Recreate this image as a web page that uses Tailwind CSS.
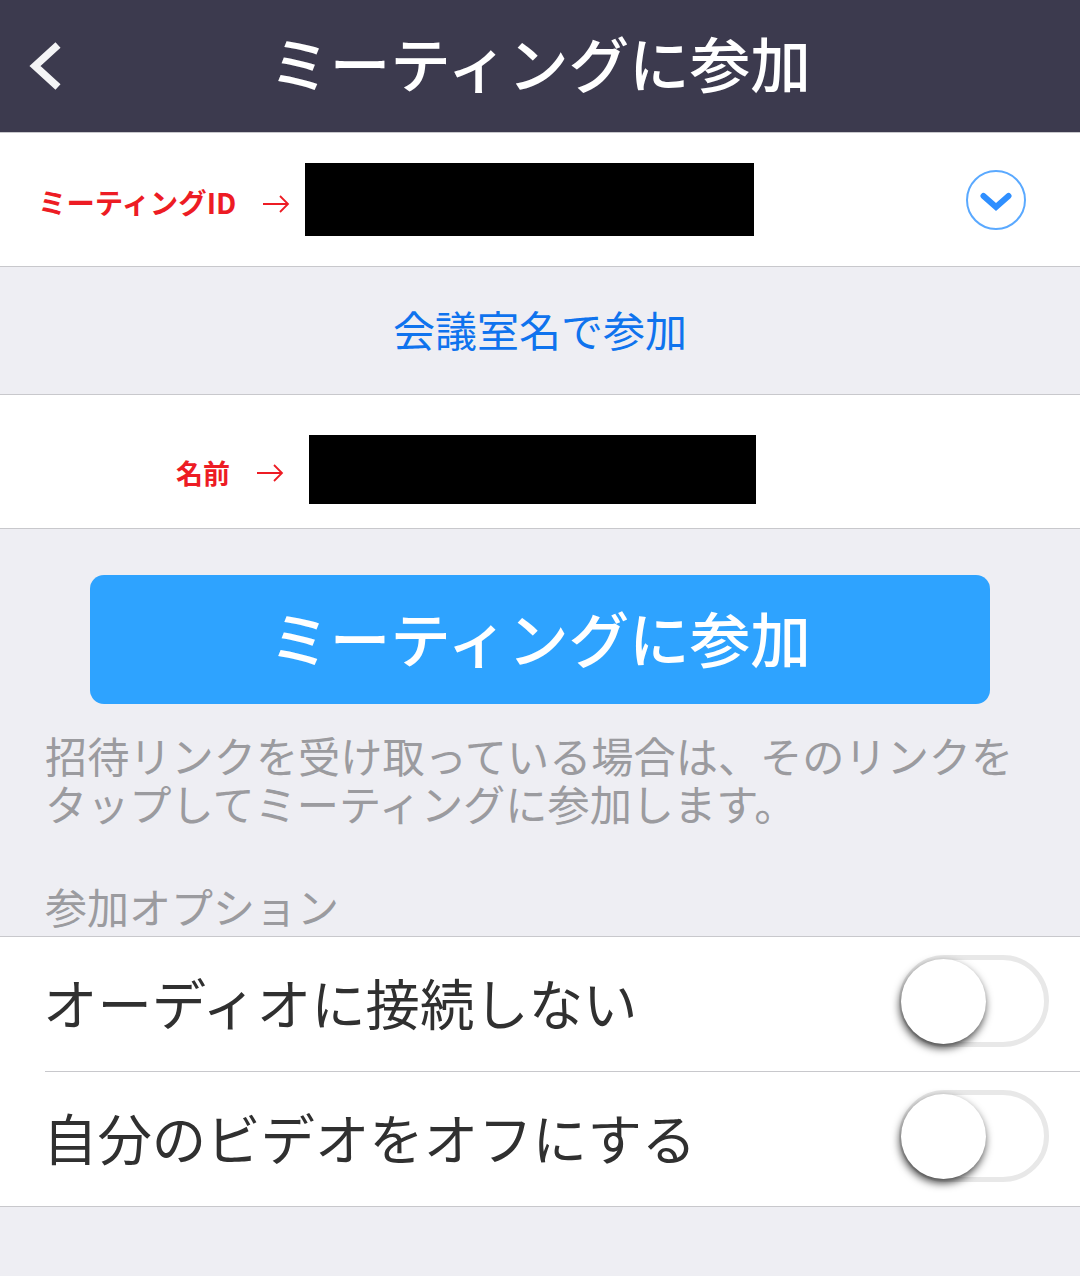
<!DOCTYPE html>
<html lang="ja">
<head>
<meta charset="UTF-8">
<title>ミーティングに参加</title>
<script src="https://cdn.jsdelivr.net/npm/@tailwindcss/browser@4"></script>
</head>
<body class="w-[1080px] h-[1276px] overflow-hidden bg-[#eeeef3] font-['Noto_Sans_CJK_JP',sans-serif]">

<!-- Header -->
<header class="relative h-[133px] bg-[#3c3a4e] border-b border-[#c8c8cc] flex items-center justify-center">
  <svg class="absolute left-[29px] top-[40px]" width="34" height="52" viewBox="0 0 34 52" fill="none">
    <path d="M29 5 L6 26 L29 47" stroke="#f4f4f6" stroke-width="7.5"/>
  </svg>
  <h1 class="text-[60.6px] leading-none font-medium text-white -mt-[7px]">ミーティングに参加</h1>
</header>

<!-- Meeting ID -->
<div class="h-[134px] bg-white border-b border-[#c8c8cc] flex items-center">
  <span class="ml-[38px] w-[199px] text-[28.4px] font-bold text-[#ed1c24] whitespace-nowrap mt-[6px] leading-none">ミーティングID</span>
  <svg class="ml-[25px] mt-[9px]" width="28" height="20" viewBox="0 0 28 20" fill="none">
    <path d="M1 10 H26 M18 2 L26 10 L18 18" stroke="#ed1c24" stroke-width="1.8"/>
  </svg>
  <div class="ml-[15px] -mt-[1px] w-[449px] h-[73px] bg-black"></div>
  <div class="ml-[212px] w-[60px] h-[60px] rounded-full border-2 border-[#5aa9ff] flex items-center justify-center">
    <svg class="mt-[5px]" width="32" height="20" viewBox="0 0 32 20" fill="none">
      <path d="M3.5 4 L16 15 L28.5 4" stroke="#2f8fff" stroke-width="6" stroke-linecap="round"/>
    </svg>
  </div>
</div>

<!-- Join by room name -->
<div class="h-[127px] flex items-center justify-center">
  <span class="text-[42px] leading-none text-[#0f73ee] -mt-[4px]">会議室名で参加</span>
</div>

<!-- Name -->
<div class="h-[135px] bg-white border-y border-[#c8c8cc] flex items-center">
  <span class="ml-[176px] w-[54px] text-[27px] font-bold text-[#ed1c24] whitespace-nowrap mt-[22px] leading-none">名前</span>
  <svg class="ml-[26px] mt-[23px]" width="28" height="20" viewBox="0 0 28 20" fill="none">
    <path d="M1 10 H26 M18 2 L26 10 L18 18" stroke="#ed1c24" stroke-width="1.8"/>
  </svg>
  <div class="ml-[25px] mt-[16px] w-[447px] h-[69px] bg-black"></div>
</div>

<!-- Join button -->
<button class="mt-[46px] mx-[90px] w-[900px] h-[129px] rounded-[14px] bg-[#2ea3ff] flex items-center justify-center">
  <span class="text-[60.6px] leading-none font-medium text-white -mt-[5px]">ミーティングに参加</span>
</button>

<p class="mt-[27px] mx-[45px] w-[990px] text-[42.2px] leading-[48px] text-[#9b9b9f]">招待リンクを受け取っている場合は、そのリンクをタップしてミーティングに参加します。</p>

<p class="mt-[52px] ml-[45px] h-[57px] text-[42px] leading-[54px] text-[#9b9b9f]">参加オプション</p>

<!-- Options -->
<section class="bg-white border-y border-[#c8c8cc]">
  <div class="h-[135px] ml-[45px] border-b border-[#c8c8cc] flex items-center justify-between pr-[31px]">
    <span class="text-[54.4px] leading-none text-[#303030] -ml-[2px] -mt-[4px]">オーディオに接続しない</span>
    <div class="relative -mt-[7px] w-[150px] h-[92px] rounded-full border-[5px] border-[#e8e8e8]">
      <div class="absolute -left-[3px] -top-[1px] w-[85px] h-[85px] rounded-full bg-white shadow-[-1px_4px_8px_rgba(0,0,0,0.75)]"></div>
    </div>
  </div>
  <div class="h-[134px] ml-[45px] flex items-center justify-between pr-[31px]">
    <span class="text-[54.4px] leading-none text-[#303030] -ml-[2px] -mt-[4px]">自分のビデオをオフにする</span>
    <div class="relative -mt-[7px] w-[150px] h-[92px] rounded-full border-[5px] border-[#e8e8e8]">
      <div class="absolute -left-[3px] -top-[1px] w-[85px] h-[85px] rounded-full bg-white shadow-[-1px_4px_8px_rgba(0,0,0,0.75)]"></div>
    </div>
  </div>
</section>

</body>
</html>
